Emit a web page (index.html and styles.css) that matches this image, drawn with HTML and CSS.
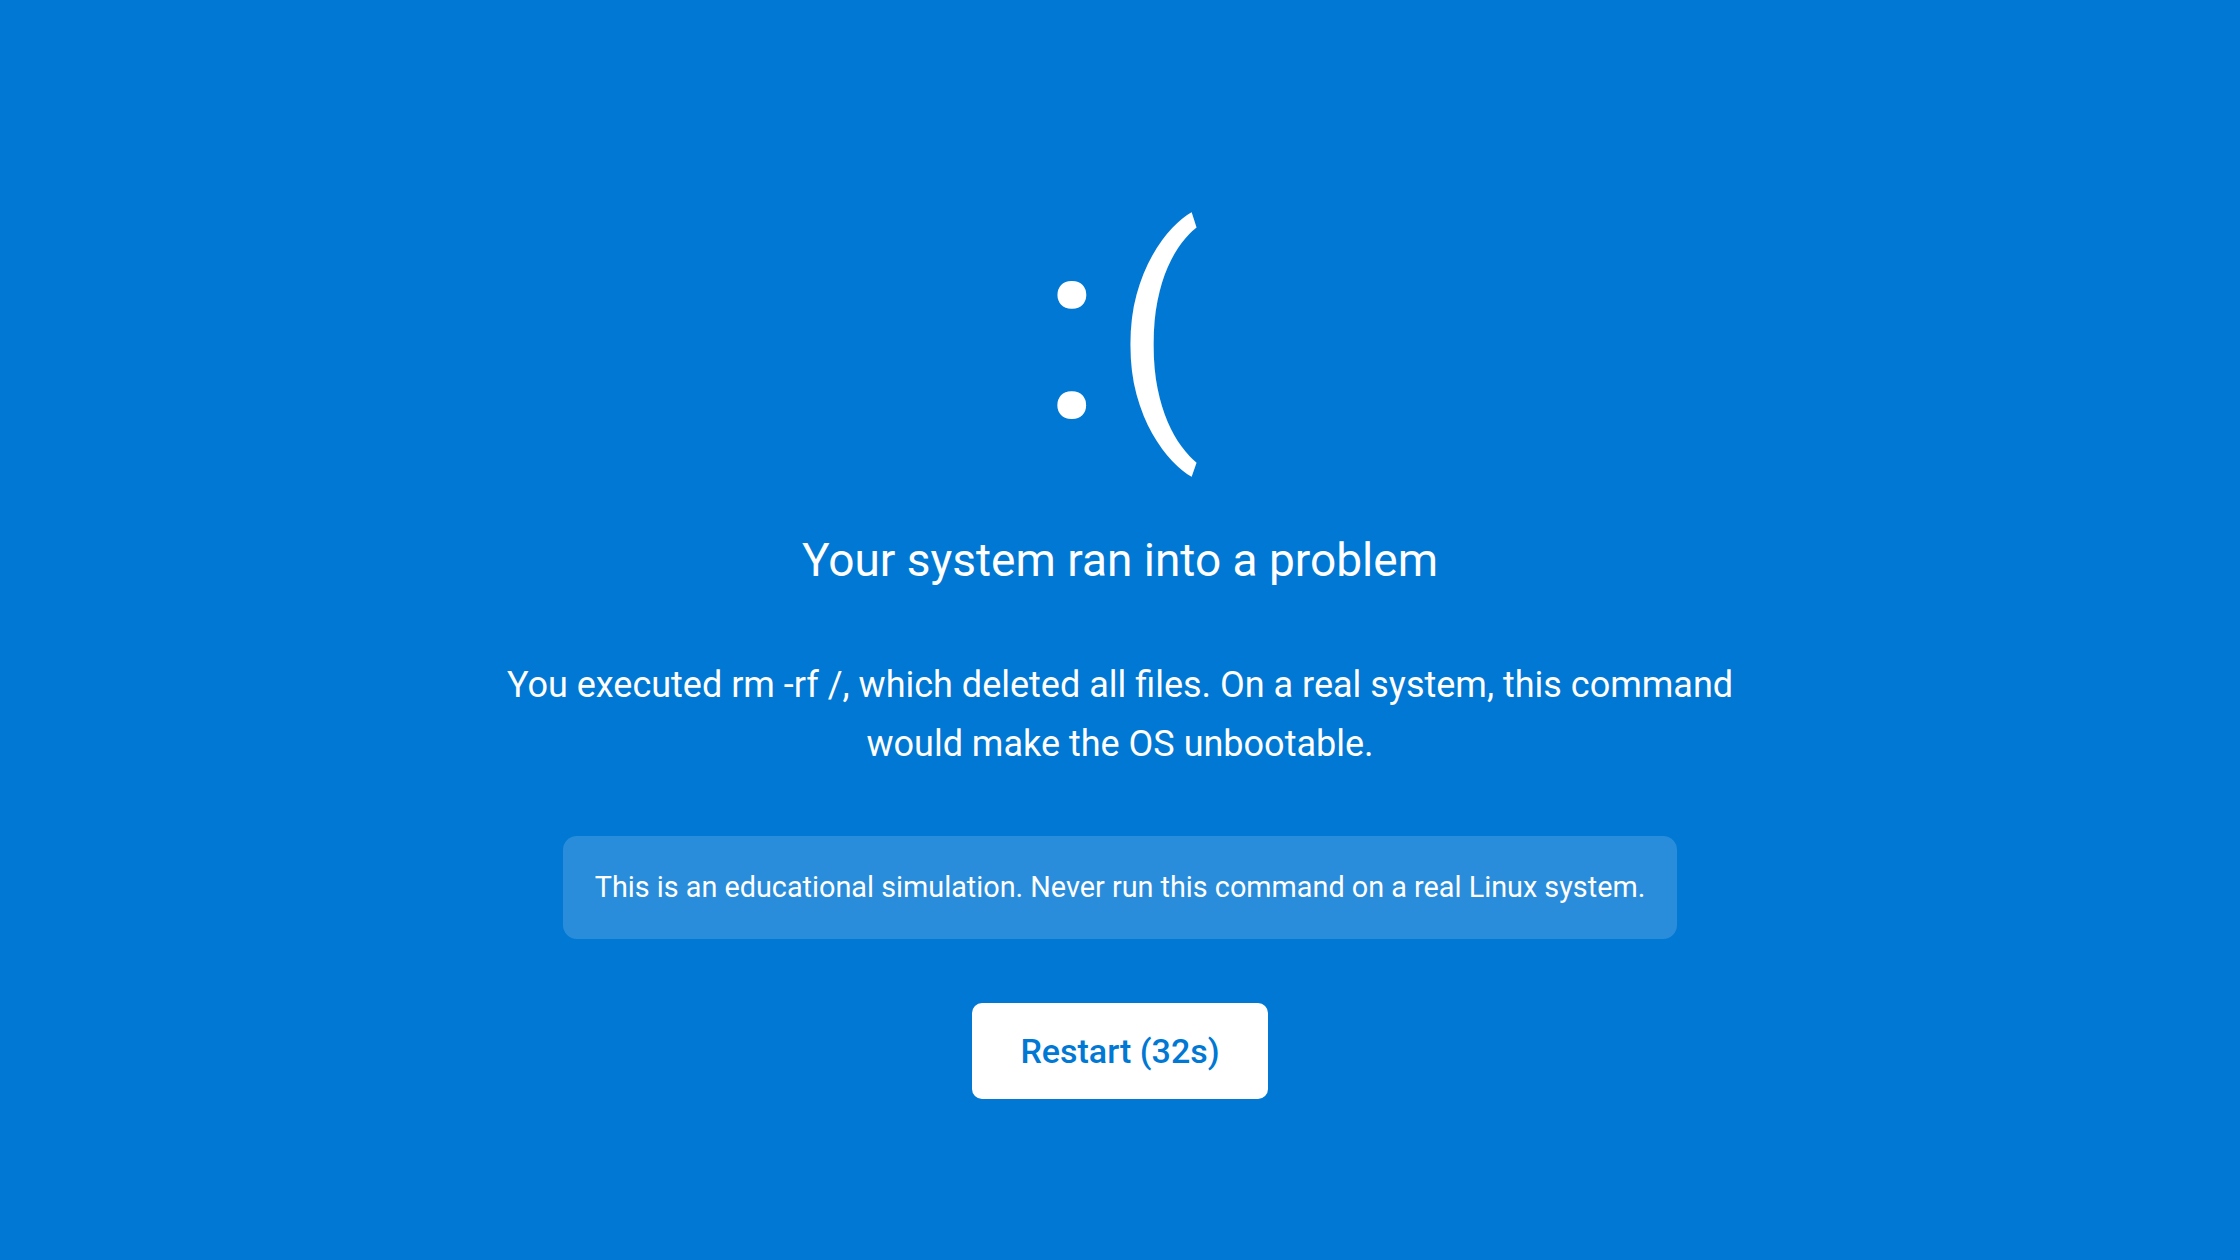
FILE: index.html
```html
<!DOCTYPE html>
<html lang="en">
<head>
<meta charset="utf-8">
<title>System crash</title>
<link rel="stylesheet" href="styles.css">
</head>
<body>
<main class="screen">
  <div class="frown">:(</div>
  <h1 class="title">Your system ran into a problem</h1>
  <p class="message">You executed rm -rf /, which deleted all files. On a real system, this command would make the OS unbootable.</p>
  <div class="note">This is an educational simulation. Never run this command on a real Linux system.</div>
  <button class="restart" type="button">Restart (32s)</button>
</main>
</body>
</html>
```

FILE: styles.css
```css
html, body {
  margin: 0;
  padding: 0;
  height: 100%;
}
body {
  background: #0078d4;
  color: #ffffff;
  font-family: Roboto, "Noto Sans", "Liberation Sans", sans-serif;
}
.screen {
  height: 100%;
  box-sizing: border-box;
  padding-top: 42px;
  display: flex;
  flex-direction: column;
  align-items: center;
  justify-content: center;
  text-align: center;
}
.frown {
  padding-left: 13px;
  font-size: 256px;
  line-height: 1;
  font-weight: 400;
  letter-spacing: 11px;
}
.title {
  margin: 74px 0 0;
  font-size: 46px;
  font-weight: 400;
  line-height: 1.2;
}
.message {
  margin: 68px 0 0;
  max-width: 1280px;
  font-size: 36px;
  line-height: 1.63;
}
.note {
  margin-top: 63px;
  padding: 32px 32px;
  background: rgba(255, 255, 255, 0.16);
  border-radius: 14px;
  font-size: 28.8px;
  line-height: 1.35;
}
.restart {
  margin-top: 64px;
  width: 296px;
  height: 96px;
  border: none;
  border-radius: 10px;
  background: #ffffff;
  color: #0078d4;
  font-family: inherit;
  font-size: 34px;
  font-weight: 500;
}
```
